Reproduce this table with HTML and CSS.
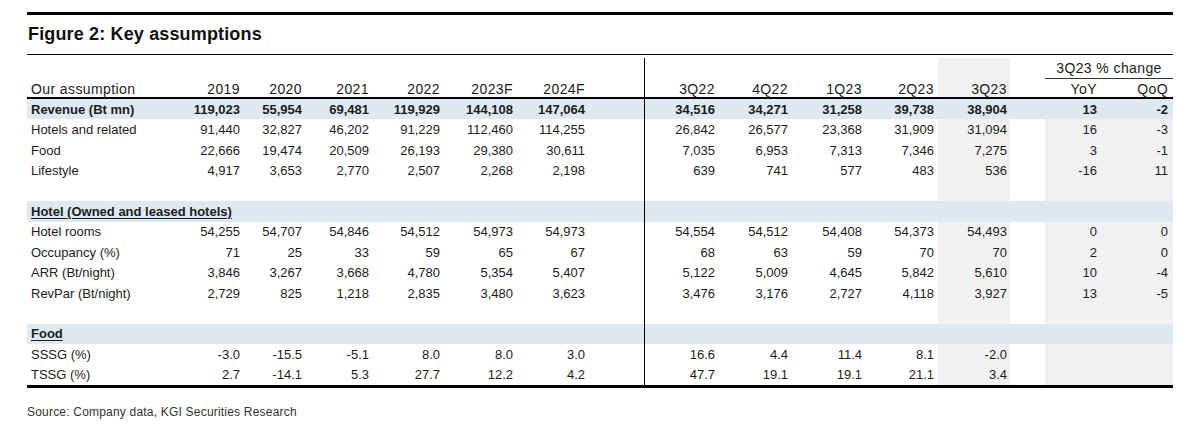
FILE: index.html
```html
<!DOCTYPE html>
<html>
<head>
<meta charset="utf-8">
<link rel="stylesheet" href="styles.css">
</head>
<body>
<div class="figure">
  <div class="title">Figure 2: Key assumptions</div>
  <table class="tbl">
    <colgroup>
      <col style="width:153px"><col style="width:64px"><col style="width:62px"><col style="width:67px"><col style="width:71px"><col style="width:73px"><col style="width:72px"><col style="width:55px"><col style="width:75px"><col style="width:73px"><col style="width:74px"><col style="width:72px"><col style="width:72px"><col style="width:35px"><col style="width:56px"><col style="width:72px">
    </colgroup>
    <thead>
      <tr class="h1">
        <th></th><th></th><th></th><th></th><th></th><th></th><th></th><th class="sp"></th>
        <th></th><th></th><th></th><th></th><th class="g"></th><th></th>
        <th colspan="2" class="chg">3Q23 % change</th>
      </tr>
      <tr class="h2">
        <th class="lbl">Our assumption</th><th>2019</th><th>2020</th><th>2021</th><th>2022</th><th>2023F</th><th>2024F</th><th class="sp"></th>
        <th>3Q22</th><th>4Q22</th><th>1Q23</th><th>2Q23</th><th class="g q3">3Q23</th><th></th>
        <th>YoY</th><th class="qoq">QoQ</th>
      </tr>
    </thead>
    <tbody>
      <tr class="band bold">
        <td class="lbl">Revenue (Bt mn)</td><td>119,023</td><td>55,954</td><td>69,481</td><td>119,929</td><td>144,108</td><td>147,064</td><td class="sp"></td>
        <td>34,516</td><td>34,271</td><td>31,258</td><td>39,738</td><td class="q3">38,904</td><td></td><td>13</td><td class="qoq">-2</td>
      </tr>
      <tr>
        <td class="lbl">Hotels and related</td><td>91,440</td><td>32,827</td><td>46,202</td><td>91,229</td><td>112,460</td><td>114,255</td><td class="sp"></td>
        <td>26,842</td><td>26,577</td><td>23,368</td><td>31,909</td><td class="g q3">31,094</td><td></td><td class="g">16</td><td class="g qoq">-3</td>
      </tr>
      <tr>
        <td class="lbl">Food</td><td>22,666</td><td>19,474</td><td>20,509</td><td>26,193</td><td>29,380</td><td>30,611</td><td class="sp"></td>
        <td>7,035</td><td>6,953</td><td>7,313</td><td>7,346</td><td class="g q3">7,275</td><td></td><td class="g">3</td><td class="g qoq">-1</td>
      </tr>
      <tr>
        <td class="lbl">Lifestyle</td><td>4,917</td><td>3,653</td><td>2,770</td><td>2,507</td><td>2,268</td><td>2,198</td><td class="sp"></td>
        <td>639</td><td>741</td><td>577</td><td>483</td><td class="g q3">536</td><td></td><td class="g">-16</td><td class="g qoq">11</td>
      </tr>
      <tr>
        <td class="lbl"></td><td></td><td></td><td></td><td></td><td></td><td></td><td class="sp"></td>
        <td></td><td></td><td></td><td></td><td class="g"></td><td></td><td class="g"></td><td class="g"></td>
      </tr>
      <tr class="band">
        <td class="lbl sec" colspan="7"><span>Hotel (Owned and leased hotels)</span></td><td class="sp"></td>
        <td></td><td></td><td></td><td></td><td></td><td></td><td></td><td></td>
      </tr>
      <tr>
        <td class="lbl">Hotel rooms</td><td>54,255</td><td>54,707</td><td>54,846</td><td>54,512</td><td>54,973</td><td>54,973</td><td class="sp"></td>
        <td>54,554</td><td>54,512</td><td>54,408</td><td>54,373</td><td class="g q3">54,493</td><td></td><td class="g">0</td><td class="g qoq">0</td>
      </tr>
      <tr>
        <td class="lbl">Occupancy (%)</td><td>71</td><td>25</td><td>33</td><td>59</td><td>65</td><td>67</td><td class="sp"></td>
        <td>68</td><td>63</td><td>59</td><td>70</td><td class="g q3">70</td><td></td><td class="g">2</td><td class="g qoq">0</td>
      </tr>
      <tr>
        <td class="lbl">ARR (Bt/night)</td><td>3,846</td><td>3,267</td><td>3,668</td><td>4,780</td><td>5,354</td><td>5,407</td><td class="sp"></td>
        <td>5,122</td><td>5,009</td><td>4,645</td><td>5,842</td><td class="g q3">5,610</td><td></td><td class="g">10</td><td class="g qoq">-4</td>
      </tr>
      <tr>
        <td class="lbl">RevPar (Bt/night)</td><td>2,729</td><td>825</td><td>1,218</td><td>2,835</td><td>3,480</td><td>3,623</td><td class="sp"></td>
        <td>3,476</td><td>3,176</td><td>2,727</td><td>4,118</td><td class="g q3">3,927</td><td></td><td class="g">13</td><td class="g qoq">-5</td>
      </tr>
      <tr>
        <td class="lbl"></td><td></td><td></td><td></td><td></td><td></td><td></td><td class="sp"></td>
        <td></td><td></td><td></td><td></td><td class="g"></td><td></td><td class="g"></td><td class="g"></td>
      </tr>
      <tr class="band">
        <td class="lbl sec" colspan="7"><span>Food</span></td><td class="sp"></td>
        <td></td><td></td><td></td><td></td><td></td><td></td><td></td><td></td>
      </tr>
      <tr>
        <td class="lbl">SSSG (%)</td><td>-3.0</td><td>-15.5</td><td>-5.1</td><td>8.0</td><td>8.0</td><td>3.0</td><td class="sp"></td>
        <td>16.6</td><td>4.4</td><td>11.4</td><td>8.1</td><td class="g q3">-2.0</td><td></td><td class="g"></td><td class="g"></td>
      </tr>
      <tr class="last">
        <td class="lbl">TSSG (%)</td><td>2.7</td><td>-14.1</td><td>5.3</td><td>27.7</td><td>12.2</td><td>4.2</td><td class="sp"></td>
        <td>47.7</td><td>19.1</td><td>19.1</td><td>21.1</td><td class="g q3">3.4</td><td></td><td class="g"></td><td class="g"></td>
      </tr>
    </tbody>
  </table>
  <div class="source">Source: Company data, KGI Securities Research</div>
</div>
</body>
</html>
```

FILE: styles.css
```css
html, body {
  margin: 0;
  padding: 0;
  background: #ffffff;
}

body {
  font-family: "Liberation Sans", Arial, sans-serif;
  color: #1c1c1c;
}

.figure {
  width: 1146px;
  margin-left: 27px;
  padding-top: 12px;
}

.title {
  border-top: 3px solid #000;
  border-bottom: 1px solid #000;
  height: 39px;
  line-height: 39px;
  font-size: 18px;
  font-weight: bold;
  letter-spacing: 0.15px;
  padding-left: 1px;
  color: #111;
}

.tbl {
  margin-top: 3px;
  width: 1146px;
  table-layout: fixed;
  border-collapse: collapse;
  border-spacing: 0;
  font-size: 13px;
}

.tbl th,
.tbl td {
  padding: 0 4px 0 0;
  text-align: right;
  white-space: nowrap;
  overflow: visible;
  font-weight: normal;
}

.tbl .lbl {
  text-align: left;
  padding-left: 4px;
  padding-right: 0;
}

.tbl .q3 {
  padding-right: 3px;
}

.tbl .qoq {
  padding-right: 5px;
}

.tbl .sp {
  border-right: 1px solid #000;
  padding: 0;
}

.tbl thead th {
  font-size: 14px;
  letter-spacing: 0.4px;
}

.h1 th {
  height: 19px;
  line-height: 16px;
}

.h1 .chg {
  text-align: center;
  padding: 0 0 1px 0;
  border-bottom: 1px solid #333;
}

.h2 th {
  height: 18px;
  line-height: 16px;
  vertical-align: bottom;
  border-bottom: 2px solid #000;
}

.tbl tbody tr {
  height: 20.43px;
}

.tbl tbody td {
  height: 20.43px;
}

.g {
  background: #f1f1f1;
}

.band td {
  background: #dee9f1;
}

.bold td {
  font-weight: bold;
}

.sec span {
  font-weight: bold;
  text-decoration: underline;
  text-decoration-thickness: 1px;
  text-underline-offset: 2px;
}

.last td {
  border-bottom: 3px solid #000;
}

.source {
  margin-top: 16px;
  font-size: 12px;
  line-height: 16px;
  letter-spacing: 0.2px;
  color: #333;
}
```
